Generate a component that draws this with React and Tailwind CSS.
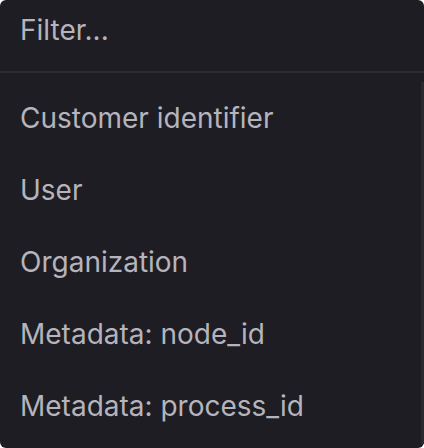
export default function App() {
  const items = [
    "Customer identifier",
    "User",
    "Organization",
    "Metadata: node_id",
    "Metadata: process_id",
  ];
  return (
    <div className="w-[424px] h-[448px] bg-white">
      <div
        className="relative w-[424px] h-[448px] rounded-[6px] bg-[#1e1d23] overflow-hidden flex flex-col"
        style={{ fontFamily: "Inter, 'Noto Sans', sans-serif" }}
      >
        <div className="h-[73px] border-b-2 border-[#2e2d33] px-5 pt-[14px] shrink-0">
          <div className="text-[28px] leading-[32px] text-[#b5b4bc]">Filter...</div>
        </div>
        <div className="pt-[9px] flex flex-col">
          {items.map((t) => (
            <div
              key={t}
              className="h-[72px] px-5 flex items-center text-[28px] leading-[32px] text-[#b5b4bc]"
            >
              {t}
            </div>
          ))}
        </div>
        <div className="absolute right-0 top-[82px] bottom-[4px] w-[3px] bg-[#2a292f]" />
      </div>
    </div>
  );
}
